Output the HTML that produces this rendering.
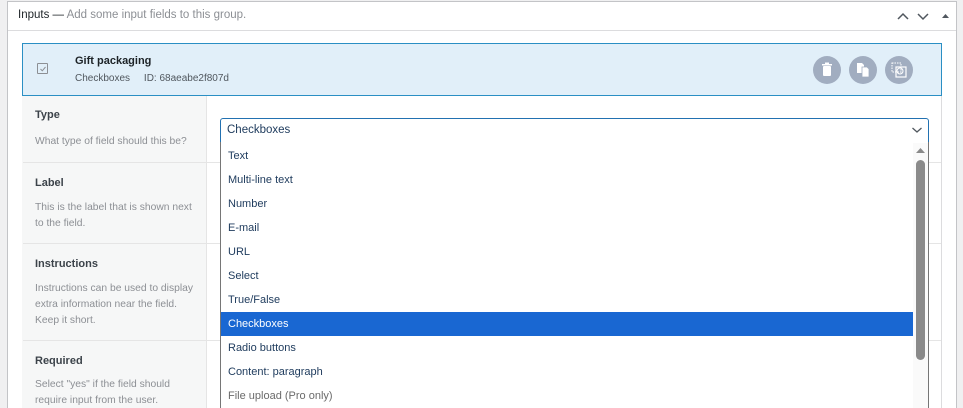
<!DOCTYPE html>
<html><head><meta charset="utf-8"><style>
*{margin:0;padding:0;box-sizing:border-box}
html,body{width:963px;height:408px;overflow:hidden}
body{background:#f0f0f1;font-family:"Liberation Sans",sans-serif;position:relative;color:#1d2327}
.a{position:absolute}
.outer{left:7px;top:1px;width:950px;height:407px;background:#fff;border:1px solid #c3c4c7;border-bottom:none}
.t{font-size:11px}
.opt{position:absolute;left:221px;width:692px;height:24px;line-height:24px;padding-left:7px;font-size:11px;color:#1d3a5c}
.d{font-size:10.3px;color:#8c8f94;line-height:16px}
</style></head><body>
<div class="a outer"></div>
<div class="a" style="left:8px;top:30px;width:948px;height:1px;background:#dcdcde"></div>
<div class="a" style="left:18px;top:9px;font-size:11.5px;color:#1d2327">Inputs — <span style="color:#8c8f94">Add some input fields to this group.</span></div>
<svg class="a" style="left:896px;top:10px" width="60" height="12" viewBox="0 0 60 12">
<path d="M2 9 L7 4 L12 9" fill="none" stroke="#50575e" stroke-width="1.5"/>
<path d="M22 4 L27 9 L32 4" fill="none" stroke="#50575e" stroke-width="1.5"/>
<path d="M46 8 L49.5 4 L53 8Z" fill="#50575e"/>
</svg>
<div class="a" style="left:22px;top:96px;width:920px;height:312px;border-left:1px solid #dcdcde;border-right:1px solid #dcdcde;background:#fff"></div>
<div class="a" style="left:22px;top:96px;width:185px;height:312px;background:#f6f7f7;border-right:1px solid #e5e5e5"></div>
<div class="a" style="left:23px;top:162px;width:918px;height:1px;background:#e5e5e5"></div>
<div class="a" style="left:23px;top:243px;width:918px;height:1px;background:#e5e5e5"></div>
<div class="a" style="left:23px;top:340px;width:918px;height:1px;background:#e5e5e5"></div>
<div class="a" style="left:22px;top:43px;width:920px;height:53px;background:#e1eff9;border:1px solid #2a8fc4"></div>
<div class="a" style="left:37px;top:63px;width:11px;height:11px;border:1px solid #8c8f94;border-radius:1px"></div>
<svg class="a" style="left:39px;top:65px" width="8" height="8"><path d="M1.5 4 L3.3 5.8 L6.5 2" fill="none" stroke="#8c8f94" stroke-width="1"/></svg>
<div class="a" style="left:75px;top:55px;font-size:11px;font-weight:bold">Gift packaging</div>
<div class="a" style="left:75px;top:73px;font-size:10px;color:#50575e">Checkboxes&nbsp;&nbsp;&nbsp;&nbsp;&nbsp;ID: 68aeabe2f807d</div>
<svg class="a" style="left:812px;top:55px" width="102" height="30" viewBox="0 0 102 30">
<circle cx="15" cy="15" r="14" fill="#a1adc0"/><circle cx="51" cy="15" r="14" fill="#a1adc0"/><circle cx="87" cy="15" r="14" fill="#a1adc0"/>
<rect x="11" y="11" width="8" height="10" rx="1" fill="#fff"/><rect x="10" y="9" width="10" height="1.5" fill="#fff"/><rect x="13" y="7.5" width="4" height="1.5" fill="#fff"/>
<path d="M45 8h5l2 2v8h-7z" fill="#fff"/><path d="M50 12h5l2 2v8h-7z" fill="#fff" stroke="#a1adc0" stroke-width="0.8"/>
<rect x="80" y="8" width="9" height="9" fill="none" stroke="#fff" stroke-width="1" stroke-dasharray="1.5 1"/><rect x="84" y="12" width="10" height="10" fill="none" stroke="#fff" stroke-width="1.2"/><circle cx="88" cy="16" r="3" fill="none" stroke="#fff"/>
</svg>
<div class="a t" style="left:35px;top:109px;font-weight:bold;color:#3c434a">Type</div>
<div class="a d" style="left:35px;top:134px">What type of field should this be?</div>
<div class="a t" style="left:35px;top:177px;font-weight:bold;color:#3c434a">Label</div>
<div class="a d" style="left:35px;top:200px">This is the label that is shown next<br>to the field.</div>
<div class="a t" style="left:35px;top:258px;font-weight:bold;color:#3c434a">Instructions</div>
<div class="a d" style="left:35px;top:281px;width:168px">Instructions can be used to display extra information near the field. Keep it short.</div>
<div class="a t" style="left:35px;top:355px;font-weight:bold;color:#3c434a">Required</div>
<div class="a d" style="left:35px;top:377px;width:165px">Select "yes" if the field should require input from the user.</div>
<div class="a" style="left:220px;top:118px;width:709px;height:25px;border:1.5px solid #2271b1;border-radius:3px 3px 0 0;background:#fff;font-size:11.5px;line-height:22px;padding-left:6px;color:#1d3a5c">Checkboxes</div>
<svg class="a" style="left:911px;top:126px" width="12" height="8"><path d="M1.5 2 L6 6 L10.5 2" fill="none" stroke="#50575e" stroke-width="1.3"/></svg>
<div class="a" style="left:220px;top:142px;width:709px;height:266px;background:#fff;border-left:1px solid #767676;border-right:1px solid #767676"></div>
<div class="a" style="left:913px;top:143px;width:15px;height:265px;background:#fafafa"></div>
<svg class="a" style="left:914px;top:146px" width="13" height="8"><path d="M2 7 L6.5 2 L11 7Z" fill="#8a8a8a"/></svg>
<div class="a" style="left:916px;top:160px;width:9px;height:200px;background:#8a8a8a;border-radius:4.5px"></div>
<div class="opt" style="top:144px">Text</div>
<div class="opt" style="top:168px">Multi-line text</div>
<div class="opt" style="top:192px">Number</div>
<div class="opt" style="top:216px">E-mail</div>
<div class="opt" style="top:240px">URL</div>
<div class="opt" style="top:264px">Select</div>
<div class="opt" style="top:288px">True/False</div>
<div class="opt" style="top:312px;background:#1967d2;color:#fff">Checkboxes</div>
<div class="opt" style="top:336px">Radio buttons</div>
<div class="opt" style="top:360px">Content: paragraph</div>
<div class="opt" style="top:384px;color:#6b6b6b">File upload (Pro only)</div>
</body></html>
